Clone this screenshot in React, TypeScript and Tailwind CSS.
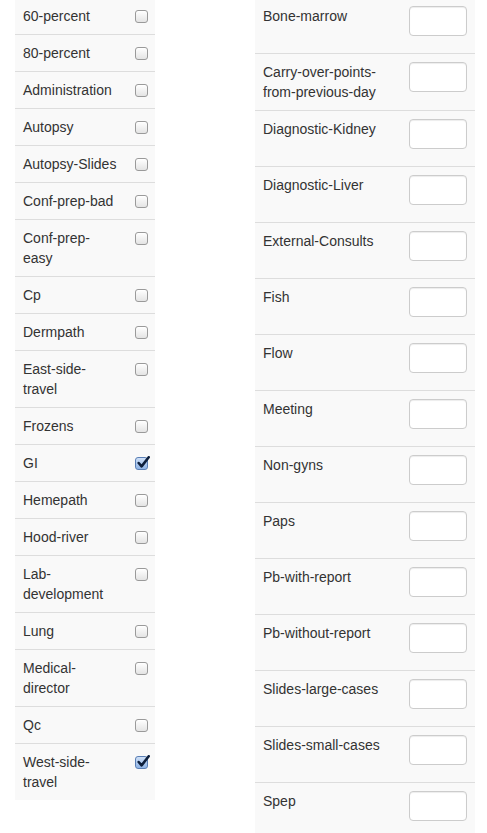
import React from 'react';

const tags = [
  { name: '60-percent' },
  { name: '80-percent' },
  { name: 'Administration' },
  { name: 'Autopsy' },
  { name: 'Autopsy-Slides' },
  { name: 'Conf-prep-bad' },
  { name: 'Conf-prep-easy' },
  { name: 'Cp' },
  { name: 'Dermpath' },
  { name: 'East-side-travel' },
  { name: 'Frozens' },
  { name: 'GI', checked: true },
  { name: 'Hemepath' },
  { name: 'Hood-river' },
  { name: 'Lab-development' },
  { name: 'Lung' },
  { name: 'Medical-director' },
  { name: 'Qc' },
  { name: 'West-side-travel', checked: true },
];

const counts = [
  'Bone-marrow',
  'Carry-over-points-from-previous-day',
  'Diagnostic-Kidney',
  'Diagnostic-Liver',
  'External-Consults',
  'Fish',
  'Flow',
  'Meeting',
  'Non-gyns',
  'Paps',
  'Pb-with-report',
  'Pb-without-report',
  'Slides-large-cases',
  'Slides-small-cases',
  'Spep',
];

function Checkbox({ checked }: { checked?: boolean }) {
  if (checked) {
    return (
      <span className="mt-[4px] block w-[13px] h-[13px] rounded-[3px] border border-[#5a7fb5] bg-gradient-to-b from-[#cfe0f7] to-[#8fb4e6] relative">
        <svg viewBox="0 0 13 13" className="absolute -top-[2px] left-0 w-[14px] h-[14px]">
          <path d="M2.5 6.5 L5.2 9.6 L11.8 1.2" fill="none" stroke="#0d1f3c" strokeWidth="2.4" strokeLinecap="round" strokeLinejoin="round" />
        </svg>
      </span>
    );
  }
  return (
    <span className="mt-[4px] block w-[13px] h-[13px] rounded-[3px] border border-[#9a9a9a] bg-gradient-to-b from-white to-[#e4e4e4] shadow-[inset_0_1px_0_#fff]" />
  );
}

export default function App() {
  return (
    <div className="bg-white min-h-[833px] overflow-hidden font-['Liberation_Sans',Arial,sans-serif] text-[14px] leading-[20px] text-[#333]">
      <div className="flex items-start -mt-[3px]">
        {/* tag checkboxes */}
        <div className="ml-[15px] w-[140px]">
          {tags.map((t) => (
            <div key={t.name} className="flex border-t border-[#ddd] bg-[#f9f9f9]">
              <div className="w-[112px] p-[8px] break-words">{t.name}</div>
              <div className="pl-[8px] pt-[8px] pb-[8px]">
                <Checkbox checked={t.checked} />
              </div>
            </div>
          ))}
        </div>

        {/* point counts */}
        <div className="ml-[100px] w-[220px]">
          {counts.map((c) => (
            <div key={c} className="flex border-t border-[#ddd] bg-[#f9f9f9]">
              <div className="w-[146px] p-[8px]">{c}</div>
              <div className="p-[8px]">
                <input
                  type="text"
                  className="block w-[58px] h-[30px] mb-[9px] rounded-[4px] border border-[#ccc] bg-white shadow-[inset_0_1px_1px_rgba(0,0,0,0.075)] outline-none"
                />
              </div>
            </div>
          ))}
        </div>
      </div>
    </div>
  );
}
